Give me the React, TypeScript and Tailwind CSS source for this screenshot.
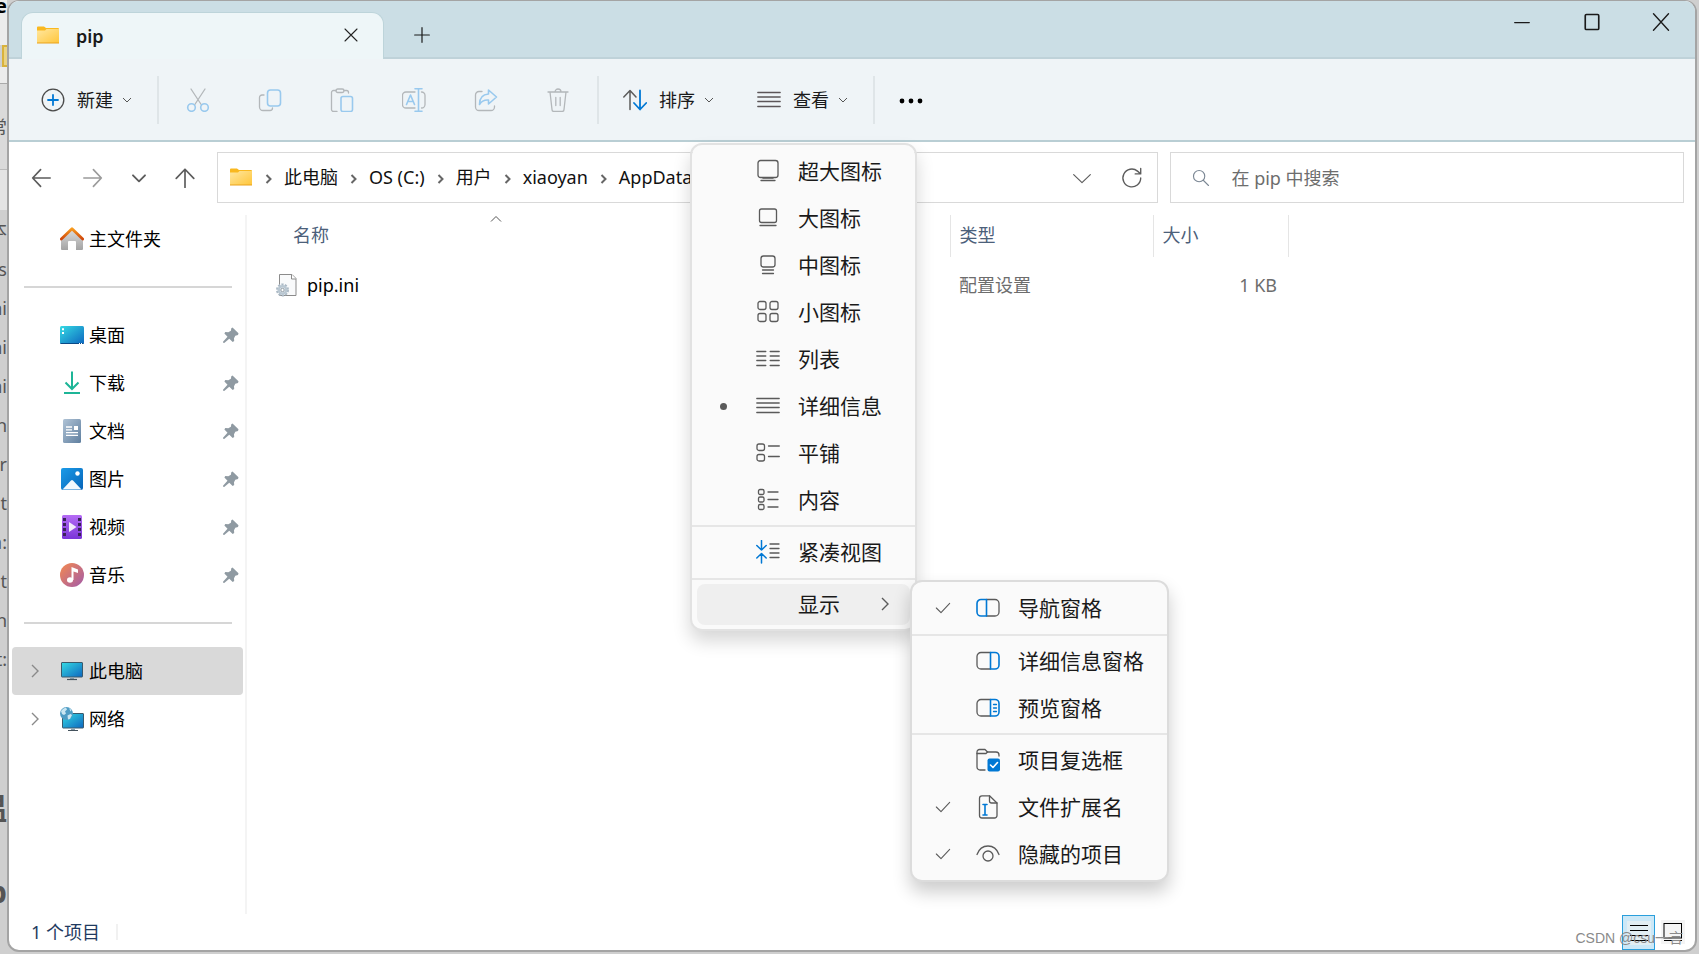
import React, { useState } from "react";

type IconProps = { className?: string };

const Stroke = ({ children, className = "size-6", w = 1.3 }: { children: React.ReactNode; className?: string; w?: number }) => (
  <svg
    viewBox="0 0 24 24"
    className={className + " shrink-0"}
    fill="none"
    stroke="currentColor"
    strokeWidth={w}
    strokeLinecap="round"
    strokeLinejoin="round"
    aria-hidden="true"
  >
    {children}
  </svg>
);

const BLUE = "#0078d4";
const PALE = "#99c9ee";

const FolderIcon = () => (
  <svg viewBox="0 0 24 24" className="size-6 shrink-0" aria-hidden="true">
    <defs>
      <linearGradient id="folder" x1="0" y1="0" x2="1" y2="1">
        <stop offset="0" stopColor="#ffe7a0" />
        <stop offset="1" stopColor="#ffc63a" />
      </linearGradient>
    </defs>
    <path d="M1 3.500q0-1 1-1h6l2 1.500h12q1 0 1 1v5H1z" fill="#f9b81f" />
    <path d="M1 6.500h8l1.500-1.500H23v14H1z" fill="url(#folder)" />
    <path d="M1 19h22" stroke="#e9a21c" strokeWidth="1" />
  </svg>
);

const ChevronDown = ({ className = "size-3" }: IconProps) => (
  <svg viewBox="0 0 12 12" className={className + " shrink-0"} fill="none" stroke="currentColor" strokeWidth="1" aria-hidden="true">
    <path d="M2 4l4 4 4-4" />
  </svg>
);

const ChevronRight = ({ className = "size-4", w = 1.4 }: { className?: string; w?: number }) => (
  <svg viewBox="0 0 16 16" className={className + " shrink-0"} fill="none" stroke="currentColor" strokeWidth={w} aria-hidden="true">
    <path d="M5 2l6 6-6 6" />
  </svg>
);

const CrumbArrow = () => (
  <svg viewBox="0 0 10 12" className="mx-[10px] mt-1 h-3 w-[11px] shrink-0 text-[#666]" fill="none" stroke="currentColor" strokeWidth="2" aria-hidden="true">
    <path d="M3 2l4 4-4 4" />
  </svg>
);

const PinIcon = () => (
  <svg viewBox="0 0 16 16" className="size-4 shrink-0 fill-[#8f9aa2]" aria-hidden="true">
    <path d="M9.500.6l6 5.700-.5 1.700-2.700.8-1.300 2.400.2 2.800-1.500.9-3.400-3.200L1.200 16 .2 15.800 0 14.700l4.500-5L1.400 6.400l.9-1.300 3 .1 2.600-1.500.4-2.500z" />
  </svg>
);

/* sidebar icons */
const HomeIcon = () => (
  <svg viewBox="0 0 24 24" className="size-6" aria-hidden="true">
    <defs>
      <linearGradient id="wall" x1="0" y1="0" x2="0" y2="1">
        <stop offset="0" stopColor="#dedede" />
        <stop offset="1" stopColor="#a3a3a3" />
      </linearGradient>
      <linearGradient id="roof" x1="0" y1="0" x2="0" y2="1">
        <stop offset="0" stopColor="#f79a1c" />
        <stop offset="1" stopColor="#d0470c" />
      </linearGradient>
    </defs>
    <path d="M1 11.500L12 2l11 9.500V22q0 1-1 1h-6v-8q0-1-1-1H9q-1 0-1 1v8H2q-1 0-1-1z" fill="url(#wall)" />
    <path d="M1.300 12L12 1.700 22.700 12" fill="none" stroke="url(#roof)" strokeWidth="2.800" strokeLinecap="round" strokeLinejoin="round" />
  </svg>
);

const ScreenGradient = () => (
  <defs>
    <linearGradient id="screen" x1="0" y1="0" x2="1" y2="1">
      <stop offset="0" stopColor="#35dbe4" />
      <stop offset="1" stopColor="#0d66bf" />
    </linearGradient>
  </defs>
);

const DesktopIcon = () => (
  <svg viewBox="0 0 24 24" className="size-6" aria-hidden="true">
    <ScreenGradient />
    <rect x="0" y="3" width="24" height="18" rx="1.500" fill="url(#screen)" />
    <path d="M0.500 20.500h23" stroke="#0b4a86" />
    <path d="M2 5.200h2v2H2zM2 9h2v2H2zM19 20h1v1h-1zM21 20h1v1h-1z" fill="#fff" />
  </svg>
);

const DownloadIcon = () => (
  <svg viewBox="0 0 24 24" className="size-6" fill="none" stroke="#1db597" strokeWidth="2" aria-hidden="true">
    <path d="M12 0.500v17.500M5.500 11.500L12 18l6.500-6.500M4 22h16" />
  </svg>
);

const DocumentIcon = () => (
  <svg viewBox="0 0 24 24" className="size-6" aria-hidden="true">
    <defs>
      <linearGradient id="doc" x1="0" y1="0" x2="1" y2="1">
        <stop offset="0" stopColor="#b0c3d6" />
        <stop offset="1" stopColor="#5f7f9f" />
      </linearGradient>
    </defs>
    <rect x="3" y="0" width="18" height="24" rx="1.500" fill="url(#doc)" />
    <path d="M6 8h6M6 10.800h6M6 13.600h12M6 16.400h12" stroke="#fff" strokeWidth="1.300" />
    <rect x="14" y="7" width="4" height="4" fill="#fff" />
  </svg>
);

const PictureIcon = () => (
  <svg viewBox="0 0 24 24" className="size-6" aria-hidden="true">
    <defs>
      <linearGradient id="pic" x1="0" y1="0" x2="1" y2="1">
        <stop offset="0" stopColor="#1b9be8" />
        <stop offset="1" stopColor="#0764b8" />
      </linearGradient>
    </defs>
    <rect x="1" y="1" width="22" height="22" rx="2" fill="url(#pic)" />
    <path d="M2.500 22.500L11 13.500q1-1 2 0l8.500 9z" fill="#f2f8fd" />
    <circle cx="17.500" cy="6.500" r="2.200" fill="#fff" />
  </svg>
);

const VideoIcon = () => (
  <svg viewBox="0 0 24 24" className="size-6" aria-hidden="true">
    <defs>
      <linearGradient id="video" x1="0" y1="0" x2="0" y2="1">
        <stop offset="0" stopColor="#b56cf5" />
        <stop offset="1" stopColor="#7a35d8" />
      </linearGradient>
    </defs>
    <rect x="2" y="0" width="20" height="24" rx="1.500" fill="url(#video)" />
    <path d="M4.500 3v19M19.500 3v19" stroke="#3a2358" strokeWidth="3" strokeDasharray="3 2" />
    <path d="M9 7l7.500 5L9 17z" fill="#f3ecfb" />
  </svg>
);

const MusicIcon = () => (
  <svg viewBox="0 0 24 24" className="size-6" aria-hidden="true">
    <defs>
      <linearGradient id="music" x1="0" y1="0" x2="1" y2="1">
        <stop offset="0" stopColor="#f58a4f" />
        <stop offset="1" stopColor="#a25aa9" />
      </linearGradient>
    </defs>
    <circle cx="12" cy="12" r="12" fill="url(#music)" />
    <ellipse cx="10" cy="17" rx="3" ry="2.800" fill="#fff" />
    <path d="M11.500 17V4l6.500 2.500V10l-4.500-1.500V17z" fill="#fff" />
  </svg>
);

const ComputerIcon = () => (
  <svg viewBox="0 0 24 24" className="size-6" aria-hidden="true">
    <ScreenGradient />
    <rect x="1.500" y="3.500" width="21" height="14.500" rx="0.500" fill="url(#screen)" stroke="#3a5a6c" />
    <path d="M10 18.500h4V20h-4z" fill="#8aa0ae" />
    <path d="M7 20.500h10" stroke="#44525c" strokeWidth="1.200" />
  </svg>
);

const NetworkIcon = () => (
  <svg viewBox="0 0 24 24" className="size-6" aria-hidden="true">
    <ScreenGradient />
    <rect x="2.500" y="6.500" width="21" height="14.500" rx="0.500" fill="url(#screen)" stroke="#3a5a6c" />
    <path d="M8 23.500h10" stroke="#44525c" />
    <path d="M11 21.500h4V23h-4z" fill="#8aa0ae" />
    <circle cx="6.500" cy="6.500" r="6.500" fill="#4f9cc4" />
    <path d="M1 4q2-3 5-3.500l1 2-2 2 1 2-2 1.500L2 7zM7.500 8.500l3-1.500 1.500 1-2 4-2 .5zM9 1l2.500 2-1 1.500z" fill="#c9e6f2" />
  </svg>
);

const IniIcon = () => (
  <svg viewBox="0 0 22 24" className="h-6 w-[22px] shrink-0" aria-hidden="true">
    <path d="M3.500 1.500h12.500l4 4V22.500H3.500z" fill="#f9fafb" stroke="#8b8b8b" />
    <path d="M15.500 1.500v4.500H20" fill="#fff" stroke="#8b8b8b" />
    <circle cx="6.500" cy="17" r="5.500" fill="none" stroke="#aab8c4" strokeWidth="2" strokeDasharray="2.200 1.250" />
    <circle cx="6.500" cy="17" r="3.700" fill="#fff" stroke="#b9c7d2" strokeWidth="2.600" />
    <circle cx="6.500" cy="17" r="1.700" fill="#fff" stroke="#71808c" strokeWidth="0.800" />
  </svg>
);

/* view menu icons */
const viewIcons: Record<string, React.ReactNode> = {
  xl: (
    <Stroke>
      <rect x="2" y="1.500" width="20" height="17" rx="2.500" />
      <path d="M5 21.500h14M7 19.200h10" />
    </Stroke>
  ),
  lg: (
    <Stroke>
      <rect x="3.500" y="3" width="17" height="13.500" rx="2" />
      <path d="M4 19.500h16" />
    </Stroke>
  ),
  md: (
    <Stroke>
      <rect x="5" y="3" width="14" height="11" rx="2.500" />
      <path d="M6.500 17h11M6.500 20.500h11" />
    </Stroke>
  ),
  sm: (
    <Stroke>
      <rect x="2" y="1.500" width="8" height="8" rx="2" />
      <rect x="14" y="1.500" width="8" height="8" rx="2" />
      <rect x="2" y="13.500" width="8" height="8" rx="2" />
      <rect x="14" y="13.500" width="8" height="8" rx="2" />
    </Stroke>
  ),
  list: (
    <Stroke>
      <path d="M0.800 4.500h9M0.800 9h9M0.800 13.500h9M0.800 18.500h9M14.200 4.500h9M14.200 9h9M14.200 13.500h9M14.200 18.500h9" />
    </Stroke>
  ),
  details: (
    <Stroke>
      <path d="M0.800 4.500h22.400M0.800 9h22.400M0.800 13.500h22.400M0.800 18.500h22.400" />
    </Stroke>
  ),
  tiles: (
    <Stroke>
      <rect x="1" y="3" width="7.500" height="6.500" rx="2" />
      <rect x="1" y="13.500" width="7.500" height="6.500" rx="2" />
      <path d="M12.500 5h10.800M12.500 15.500h10.800" />
    </Stroke>
  ),
  content: (
    <Stroke>
      <rect x="2.500" y="1.500" width="5.500" height="5" rx="1.500" />
      <rect x="2.500" y="9" width="5.500" height="5" rx="1.500" />
      <rect x="2.500" y="16.500" width="5.500" height="5" rx="1.500" />
      <path d="M12 4h10M12 11.500h10M12 19h10" />
    </Stroke>
  ),
  compact: (
    <Stroke>
      <path d="M14 4h9M14 8.500h9M14 13h9M14 17.500h9" />
      <path d="M5.500 0.500v9.500M0.800 5.500l4.700 4.500 4.700-4.500M5.500 23V13.500M0.800 18L5.500 13.500l4.700 4.500" stroke={BLUE} strokeWidth="1.500" />
    </Stroke>
  ),
};

const PaneBase = ({ side, children }: { side: "left" | "right"; children?: React.ReactNode }) => (
  <Stroke>
    {side === "left" ? (
      <>
        <path d="M10.500 3.500H19a4 4 0 0 1 4 4V16a4 4 0 0 1-4 4h-8.500" />
        <path d="M10.500 3.500H5a4 4 0 0 0-4 4V16a4 4 0 0 0 4 4h5.500z" stroke={BLUE} strokeWidth="1.600" />
      </>
    ) : (
      <>
        <path d="M14.500 3.500H5a4 4 0 0 0-4 4V16a4 4 0 0 0 4 4h9.500" />
        <path d="M14.500 3.500H19a4 4 0 0 1 4 4V16a4 4 0 0 1-4 4h-4.500z" stroke={BLUE} strokeWidth="1.600" />
      </>
    )}
    {children}
  </Stroke>
);

const showIcons: Record<string, React.ReactNode> = {
  nav: <PaneBase side="left" />,
  detailPane: <PaneBase side="right" />,
  preview: (
    <PaneBase side="right">
      <path d="M17.500 8.500h3M17.500 12h3M17.500 15.500h3" stroke={BLUE} />
    </PaneBase>
  ),
  checkboxes: (
    <Stroke>
      <path d="M9 22H4a3 3 0 0 1-3-3V4a2.500 2.500 0 0 1 2.500-2.500h5.500l2.500 2.500H20a3 3 0 0 1 3 3v1" />
      <path d="M1 5.500h9l1.500-1.500" />
      <rect x="11.500" y="10.500" width="12.500" height="13" rx="2" fill={BLUE} stroke="none" />
      <path d="M14.500 17l2.500 2.500 4.500-5" stroke="#fff" strokeWidth="1.600" />
    </Stroke>
  ),
  ext: (
    <Stroke>
      <path d="M13.500 0.800H6a2.500 2.500 0 0 0-2.500 2.500v17.200A2.500 2.500 0 0 0 6 23h12.500a2.500 2.500 0 0 0 2.500-2.500V8z" />
      <path d="M13.500 0.800V6a2 2 0 0 0 2 2H21" />
      <path d="M7 9.500h4M7 20h4M9 9.500V20" stroke={BLUE} strokeWidth="1.600" />
    </Stroke>
  ),
  hidden: (
    <Stroke>
      <path d="M1 12.500C3 7 7 4 12 4s9 3 11 8.500" />
      <circle cx="12" cy="14" r="5" />
    </Stroke>
  ),
};

const viewModes = [
  { id: "xl", label: "超大图标" },
  { id: "lg", label: "大图标" },
  { id: "md", label: "中图标" },
  { id: "sm", label: "小图标" },
  { id: "list", label: "列表" },
  { id: "details", label: "详细信息" },
  { id: "tiles", label: "平铺" },
  { id: "content", label: "内容" },
];

const showGroups = [
  [{ id: "nav", label: "导航窗格" }],
  [
    { id: "detailPane", label: "详细信息窗格" },
    { id: "preview", label: "预览窗格" },
  ],
  [
    { id: "checkboxes", label: "项目复选框" },
    { id: "ext", label: "文件扩展名" },
    { id: "hidden", label: "隐藏的项目" },
  ],
];

const quickAccess = [
  { label: "桌面", icon: <DesktopIcon /> },
  { label: "下载", icon: <DownloadIcon /> },
  { label: "文档", icon: <DocumentIcon /> },
  { label: "图片", icon: <PictureIcon /> },
  { label: "视频", icon: <VideoIcon /> },
  { label: "音乐", icon: <MusicIcon /> },
];

const crumbs = ["此电脑", "OS (C:)", "用户", "xiaoyan", "AppData"];

const tools = [
  {
    name: "剪切",
    icon: (
      <Stroke>
        <path d="M5 1l10.500 16M19 1L8.500 17" />
        <circle cx="5.500" cy="19.500" r="3.800" stroke={PALE} strokeWidth="1.600" />
        <circle cx="18.500" cy="19.500" r="3.800" stroke={PALE} strokeWidth="1.600" />
      </Stroke>
    ),
  },
  {
    name: "复制",
    icon: (
      <Stroke>
        <path d="M6 7H4a2.500 2.500 0 0 0-2.500 2.500V19A3.500 3.500 0 0 0 5 22.500h7a2.500 2.500 0 0 0 2.500-2.500" />
        <rect x="9.500" y="2" width="13" height="16" rx="3" stroke={PALE} strokeWidth="1.600" />
      </Stroke>
    ),
  },
  {
    name: "粘贴",
    icon: (
      <Stroke>
        <path d="M7 23.500H3.500A2 2 0 0 1 1.500 21.500v-17a2 2 0 0 1 2-2H6M14 2.500h2.500a2 2 0 0 1 2 2V5" />
        <rect x="6" y="1" width="8" height="3.500" rx="1.700" />
        <rect x="11" y="8.500" width="11.500" height="15" rx="2" stroke={PALE} strokeWidth="1.600" />
      </Stroke>
    ),
  },
  {
    name: "重命名",
    icon: (
      <Stroke>
        <path d="M13 4H4a3.500 3.500 0 0 0-3.500 3.500v9A3.500 3.500 0 0 0 4 20h9M19.500 4a3.500 3.500 0 0 1 3.500 3.500v9a3.500 3.500 0 0 1-3.500 3.500" />
        <path d="M4.500 16.500L8.500 7l4 9.500M6 13.500h5M13 0.800h7M13 23.200h7M16.500 0.800v22.400" stroke={PALE} strokeWidth="1.600" />
      </Stroke>
    ),
  },
  {
    name: "共享",
    icon: (
      <Stroke>
        <path d="M8 3.500H5A3.500 3.500 0 0 0 1.500 7v12A3.500 3.500 0 0 0 5 22.500h12a3.500 3.500 0 0 0 3.500-3.500v-1" />
        <path d="M14.500 2l8 7-8 7v-4q-6-.5-9 4.500 0-10 9-10.500z" stroke={PALE} strokeWidth="1.600" />
      </Stroke>
    ),
  },
  {
    name: "删除",
    icon: (
      <Stroke>
        <path d="M2 4h20M4 4l2 17.500a2 2 0 0 0 2 2h8a2 2 0 0 0 2-2L20 4M9 4a3 3 0 0 1 6 0M9.800 9.500v8M14.200 9.500v8" />
      </Stroke>
    ),
  },
];

// pieces of the page that peek out left of the window
const behind = ["本", "is", "ni", "ni", "ni", "h", "or", "nt", "a:", "nt", "h", "t:"];

const ToolDivider = () => <div className="mx-[15px] h-12 w-[2px] shrink-0 bg-[#dfe5e8]" />;

const MenuDivider = () => <div className="h-[2px] bg-[#e6e6e6]" />;

interface MenuItemProps {
  label: string;
  icon?: React.ReactNode;
  marker?: React.ReactNode;
  active?: boolean;
  arrow?: boolean;
  onClick?: () => void;
}

function MenuItem({ label, icon, marker, active, arrow, onClick }: MenuItemProps) {
  return (
    <div className="px-[5px] py-[3px]">
      <button
        role="menuitem"
        onClick={onClick}
        className={`flex h-[41px] w-full items-center rounded-lg text-left text-[21px] leading-6 ${active ? "bg-[#efefef]" : "hover:bg-[#efefef]"}`}
      >
        <span className="flex w-[59px] shrink-0 justify-center pr-[7px] text-[#5a5a5a]">{marker}</span>
        <span className="w-6 shrink-0 text-[#5a5a5a]">{icon}</span>
        <span className="ml-[18px] flex-1 whitespace-nowrap">{label}</span>
        {arrow && <ChevronRight className="mr-[17px] size-4 text-[#5a5a5a]" />}
      </button>
    </div>
  );
}

function ViewMenu() {
  const [mode, setMode] = useState("details");
  const [shown, setShown] = useState<string[]>(["nav", "ext", "hidden"]);

  const toggle = (id: string) => {
    setShown(shown.includes(id) ? shown.filter((s) => s !== id) : [...shown, id]);
  };

  return (
    <div
      role="menu"
      className="absolute top-[67px] left-[-58px] z-10 w-[227px] rounded-xl border-2 border-[#e2e2e2] bg-[#fafafa] bg-clip-padding pb-px text-[#1a1a1a] shadow-[0_10px_18px_rgba(0,0,0,0.16)]"
    >
      <div className="pt-[3px] pb-px">
        {viewModes.map((m) => (
          <MenuItem
            key={m.id}
            label={m.label}
            icon={viewIcons[m.id]}
            marker={mode === m.id && <span className="size-[7px] rounded-full bg-[#5a5a5a]" />}
            onClick={() => setMode(m.id)}
          />
        ))}
      </div>
      <MenuDivider />
      <div className="py-[2px]">
        <MenuItem label="紧凑视图" icon={viewIcons.compact} />
      </div>
      <MenuDivider />
      <div className="relative pt-px">
        <MenuItem label="显示" active arrow />
        <div
          role="menu"
          className="absolute top-0 left-[218px] w-[259px] rounded-xl border-2 border-[#dcdcdc] bg-[#fafafa] bg-clip-padding shadow-[0_10px_18px_rgba(0,0,0,0.2)]"
        >
          {showGroups.map((group, i) => (
            <React.Fragment key={i}>
              {i > 0 && <MenuDivider />}
              <div className={i === 0 ? "pt-[3px] pb-[2px]" : i === 1 ? "pt-[2px] pb-px" : "py-[2px]"}>
                {group.map((item) => (
                  <MenuItem
                    key={item.id}
                    label={item.label}
                    icon={showIcons[item.id]}
                    marker={
                      shown.includes(item.id) && (
                        <Stroke className="size-4" w={1.6}>
                          <path d="M2 12l7 7L22 5" />
                        </Stroke>
                      )
                    }
                    onClick={() => toggle(item.id)}
                  />
                ))}
              </div>
            </React.Fragment>
          ))}
        </div>
      </div>
    </div>
  );
}

function TitleBar() {
  return (
    <div className="flex h-[58px] shrink-0 items-end rounded-t-[10px] bg-[#cbdee5] pl-3 shadow-[inset_0_-2px_0_#bfd2d9]">
      <div className="flex h-[47px] w-[363px] items-center rounded-t-xl border border-b-0 border-[#bdd4da] bg-[#eef6f8] pr-4 pl-[14px]">
        <FolderIcon />
        <span className="ml-4 flex-1 text-lg leading-6 font-semibold">pip</span>
        <button aria-label="关闭标签页" className="flex size-8 items-center justify-center pb-[2px] text-[#222]">
          <Stroke className="size-4" w={1.6}>
            <path d="M3 3l18 18M21 3L3 21" />
          </Stroke>
        </button>
      </div>
      <button aria-label="新标签页" className="ml-[22px] flex h-12 w-8 items-center justify-center">
        <Stroke className="size-4" w={1.8}>
          <path d="M12 1v22M1 12h22" />
        </Stroke>
      </button>
      <div className="ml-auto flex self-start">
        <button aria-label="最小化" className="flex h-[42px] w-[70px] items-center justify-center">
          <Stroke className="size-4" w={1.8}>
            <path d="M1 12.800h22" />
          </Stroke>
        </button>
        <button aria-label="最大化" className="flex h-[42px] w-[70px] items-center justify-center">
          <Stroke className="size-[18px]" w={2.2}>
            <rect x="3" y="2" width="18" height="20" rx="1.500" />
          </Stroke>
        </button>
        <button aria-label="关闭" className="flex h-[42px] w-[68px] items-center justify-center">
          <Stroke className="size-[18px]" w={1.8}>
            <path d="M2 1l20 22M22 1L2 23" />
          </Stroke>
        </button>
      </div>
    </div>
  );
}

function Toolbar() {
  const [open, setOpen] = useState(true);

  return (
    <div className="flex h-[83px] shrink-0 items-center border-b-2 border-[#b9ced4] bg-[#eff4f7] pl-[23px] text-lg leading-6">
      <button className="flex h-12 items-center px-[9px]">
        <Stroke>
          <circle cx="12" cy="12" r="10.800" stroke="#4a4a4a" />
          <path d="M12 7v10M7 12h10" stroke={BLUE} strokeWidth="1.800" />
        </Stroke>
        <span className="ml-3">新建</span>
        <ChevronDown className="ml-2 size-3 text-[#555]" />
      </button>
      <ToolDivider />
      <div className="flex gap-6 text-[#b3b7ba]">
        {tools.map((t) => (
          <button key={t.name} aria-label={t.name} className="flex size-12 items-center justify-center">
            {t.icon}
          </button>
        ))}
      </div>
      <ToolDivider />
      <div className="flex gap-6">
        <button className="flex h-12 items-center px-[9px]">
          <Stroke w={1.5}>
            <path d="M7 21.500V3M0.800 9L7 2.500 13 9" stroke="#5c5c5c" />
            <path d="M17 2.500V21M11 15l6 6.500 6.200-6.500" stroke={BLUE} strokeWidth="1.800" />
          </Stroke>
          <span className="ml-3">排序</span>
          <ChevronDown className="ml-2 size-3 text-[#555]" />
        </button>
        <div className="relative">
          <button onClick={() => setOpen(!open)} aria-expanded={open} className="flex h-12 items-center px-[9px]">
            <span className="text-[#5c5558]">{viewIcons.details}</span>
            <span className="ml-3">查看</span>
            <ChevronDown className="ml-2 size-3 text-[#555]" />
          </button>
          {open && <ViewMenu />}
        </div>
      </div>
      <ToolDivider />
      <button aria-label="查看更多" className="flex h-12 items-center px-[9px]">
        <svg viewBox="0 0 24 24" className="size-6" aria-hidden="true">
          <circle cx="3" cy="13" r="2.400" />
          <circle cx="12" cy="13" r="2.400" />
          <circle cx="21" cy="13" r="2.400" />
        </svg>
      </button>
    </div>
  );
}

function AddressRow() {
  return (
    <div className="flex shrink-0 items-center pt-[10px] pr-[11px] pb-3 pl-3 text-lg leading-6">
      <div className="mr-3 flex gap-[6px] text-[#5c5c5c]">
        <button aria-label="后退" className="mr-[6px] flex size-10 items-center justify-center">
          <Stroke className="size-5" w={2}>
            <path d="M23 12H2M11.500 2L2 12l9.500 10" />
          </Stroke>
        </button>
        <button aria-label="前进" className="flex size-10 items-center justify-center text-[#9b9b9b]">
          <Stroke className="size-5" w={2}>
            <path d="M1 12h21M12.500 2l9.500 10-9.500 10" />
          </Stroke>
        </button>
        <button aria-label="最近浏览的位置" className="flex size-10 items-center justify-center">
          <Stroke className="size-4" w={2.800}>
            <path d="M3 8l9 9 9-9" />
          </Stroke>
        </button>
        <button aria-label="向上" className="flex size-10 items-center justify-center">
          <Stroke className="size-5" w={2}>
            <path d="M12 23.500V1.500M1.500 12.500L12 1.500l10.500 11" />
          </Stroke>
        </button>
      </div>
      <div className="grid flex-1 grid-cols-[11fr_6fr] gap-3">
        <div className="flex h-[51px] min-w-0 items-center border border-[#d9d9d9] bg-white pl-[11px]">
          <FolderIcon />
          <div className="flex flex-1 items-center pb-px text-[#111]">
            {crumbs.map((c) => (
              <React.Fragment key={c}>
                <CrumbArrow />
                <a href="#" className="whitespace-nowrap">
                  {c}
                </a>
              </React.Fragment>
            ))}
          </div>
          <button aria-label="以前的位置" className="flex h-10 w-[50px] items-center justify-center text-[#5c5c5c]">
            <Stroke className="size-5" w={1.4}>
              <path d="M2 8l10 9.500L22 8" />
            </Stroke>
          </button>
          <button aria-label="刷新" className="flex h-10 w-[50px] items-center justify-center text-[#5c5c5c]">
            <Stroke className="size-[22px]" w={1.5}>
              <path d="M21.500 12A9.700 9.700 0 1 1 18 4.500L21 7M21.500 1.500V7.500H15.500" />
            </Stroke>
          </button>
        </div>
        <label className="flex h-[51px] min-w-0 items-center border border-[#d9d9d9] bg-white pl-[21px]">
          <Stroke className="size-[18px] text-[#7b8794]" w={1.5}>
            <circle cx="9.500" cy="9.500" r="7.500" />
            <path d="M15 15l7 7" />
          </Stroke>
          <input aria-label="搜索" placeholder="在 pip 中搜索" className="ml-[21px] min-w-0 flex-1 bg-transparent outline-none placeholder:text-[#6d6d6d]" />
        </label>
      </div>
    </div>
  );
}

interface SideItemProps {
  label: string;
  icon: React.ReactNode;
  pinned?: boolean;
  expandable?: boolean;
  selected?: boolean;
}

function SideItem({ label, icon, pinned, expandable, selected }: SideItemProps) {
  return (
    <a href="#" className={`mr-[2px] ml-[3px] flex h-12 items-center rounded-sm pr-1 text-lg leading-6 text-black ${selected ? "bg-[#d9d9d9]" : ""}`}>
      <span className="flex w-12 shrink-0 justify-center pr-[2px] text-[#8a8a8a]">{expandable && <ChevronRight />}</span>
      {icon}
      <span className="ml-[5px] flex-1">{label}</span>
      {pinned && <PinIcon />}
    </a>
  );
}

const SideDivider = () => (
  <div className="flex h-12 items-center pr-[13px] pl-[15px]">
    <div className="h-[2px] flex-1 bg-[#d6d6d6]" />
  </div>
);

function Sidebar() {
  return (
    <nav className="w-[238px] shrink-0 border-r-2 border-[#f4f4f4]">
      <SideItem label="主文件夹" icon={<HomeIcon />} />
      <SideDivider />
      {quickAccess.map((q) => (
        <SideItem key={q.label} label={q.label} icon={q.icon} pinned />
      ))}
      <SideDivider />
      <SideItem label="此电脑" icon={<ComputerIcon />} expandable selected />
      <SideItem label="网络" icon={<NetworkIcon />} expandable />
    </nav>
  );
}

function FileTable() {
  return (
    <div className="min-w-0 flex-1">
      <table className="w-full table-fixed text-left text-lg leading-6">
        <colgroup>
          <col className="w-[469px]" />
          <col className="w-[234px]" />
          <col className="w-[203px]" />
          <col className="w-[135px]" />
          <col />
        </colgroup>
        <thead>
          <tr className="h-[42px] text-[#4c607a]">
            <th className="relative pb-[2px] pl-[46px] font-normal">
              名称
              <svg viewBox="0 0 12 8" className="absolute top-0 left-[243px] h-2 w-3" fill="none" stroke="#555" aria-hidden="true">
                <path d="M1 6.500l5-5 5 5" />
              </svg>
            </th>
            <th className="border-r border-[#e5e5e5]"></th>
            <th className="border-r border-[#e5e5e5] pb-[2px] pl-[9px] font-normal">类型</th>
            <th className="border-r border-[#e5e5e5] pb-[2px] pl-[9px] font-normal">大小</th>
            <th></th>
          </tr>
        </thead>
        <tbody>
          <tr className="h-14 text-[#6d6d6d]">
            <td className="pl-[29px]">
              <div className="flex items-center text-black">
                <IniIcon />
                <span className="ml-[9px]">pip.ini</span>
              </div>
            </td>
            <td></td>
            <td className="pl-[9px]">配置设置</td>
            <td className="pr-[11px] text-right">1 KB</td>
            <td></td>
          </tr>
        </tbody>
      </table>
    </div>
  );
}

function StatusBar() {
  return (
    <div className="relative flex h-9 shrink-0 items-center pr-[10px] pl-[22px] text-lg leading-6 text-[#1f3a60]">
      <span>1 个项目</span>
      <div className="ml-4 h-4 w-[2px] bg-[#f1f1f1]" />
      <button aria-label="详细信息" className="ml-auto flex h-[35px] w-[33px] items-center justify-center self-end border border-[#2a9fdc] bg-[#cce8f7] text-black">
        <svg viewBox="0 0 24 24" className="size-6 bg-[#e2eef3]" stroke="currentColor" aria-hidden="true">
          <path d="M3 4.500h18M3 9.500h18M3 14.500h18M3 19.500h18" />
        </svg>
      </button>
      <button aria-label="大图标" className="ml-[6px] flex size-6 items-center justify-center bg-[#f4f4f4] text-black">
        <svg viewBox="0 0 24 24" className="size-6" fill="none" stroke="currentColor" aria-hidden="true">
          <rect x="3" y="3.500" width="17.500" height="14.500" />
          <path d="M3 20.500h18" />
        </svg>
      </button>
      <span className="absolute right-3 bottom-[2px] font-['Liberation_Sans','Noto_Sans_CJK_SC',sans-serif] text-sm text-[#8a8a8a]">CSDN @csu一言</span>
    </div>
  );
}

export default function App() {
  return (
    <div className="flex h-screen min-h-[700px] overflow-hidden bg-[#cfcfcf] pr-[2px] pb-[2px] font-['Noto_Sans','Noto_Sans_CJK_SC',sans-serif] text-[#1a1a1a]">
      <div className="w-[7px] shrink-0 overflow-hidden text-lg text-[#555]" aria-hidden="true">
        <div className="flex h-[45px] justify-end bg-[#ececec] text-xl leading-3 font-bold text-black">e</div>
        <div className="ml-[2px] h-[22px] border-2 border-r-0 border-[#d9b23c] bg-[#e9d384]" />
        <div className="h-[17px] border-b border-[#aaa] bg-[#ececec]" />
        <div className="flex h-[86px] items-center justify-end border-b border-[#bbb] bg-[#dadada]">常</div>
        <div className="h-[40px] bg-[#e4e4e4]" />
        {behind.map((text, i) => (
          <div key={i} className="flex h-[39px] items-center justify-end">
            {text}
          </div>
        ))}
        <div className="mt-[100px] flex h-[60px] items-center justify-end text-3xl font-bold">温</div>
        <div className="mt-6 flex h-[60px] items-center justify-end text-3xl font-bold">p</div>
      </div>
      <div className="flex min-w-0 flex-1 flex-col rounded-xl border-2 border-t border-[#a4a4a4] bg-white">
        <TitleBar />
        <Toolbar />
        <AddressRow />
        <div className="flex min-h-0 flex-1">
          <Sidebar />
          <FileTable />
        </div>
        <StatusBar />
      </div>
    </div>
  );
}
